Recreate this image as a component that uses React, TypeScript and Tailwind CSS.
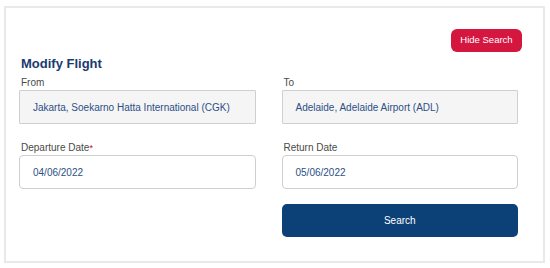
import React from 'react'

const font = { fontFamily: '"Liberation Sans", Arial, sans-serif' }

interface FieldProps {
  label: string
  value: string
  required?: boolean
  readOnly?: boolean
}

const Field: React.FC<FieldProps> = ({ label, value, required, readOnly }) => {
  return (
    <div className="flex flex-col">
      <label className="pl-[2px] text-[10px] leading-[12px] text-[#4a4a4a]">
        {label}
        {required && <span className="text-[#d0021b] text-[9px] align-top">*</span>}
      </label>
      <div
        className={`mt-[1px] h-[34px] flex items-center pl-[13px] text-[10px] text-[#2c4f86] border ${
          readOnly
            ? 'bg-[#f5f5f5] border-[#cfcfcf] rounded-[1px]'
            : 'bg-white border-[#cfcfcf] rounded-[4px]'
        }`}
      >
        {value}
      </div>
    </div>
  )
}

export default function App() {
  return (
    <div className="w-[550px] h-[268px] bg-white pt-[6px] pl-[4px]" style={font}>
      <div className="w-[541px] h-[257px] border-2 border-[#e9e9e9] bg-white pt-[21px] pl-[13px] pr-[25px]">
        <div className="flex justify-end mr-[-4px]">
          <button className="w-[71px] h-[23px] rounded-[6px] bg-[#d5173f] text-white text-[9.5px] flex items-center justify-center">
            Hide Search
          </button>
        </div>

        <h2 className="mt-[4px] pl-[2px] text-[13px] leading-[16px] font-bold text-[#1b3a6d]">Modify Flight</h2>

        <div className="mt-[5px] grid grid-cols-2 gap-x-[26px]">
          <Field label="From" value="Jakarta, Soekarno Hatta International (CGK)" readOnly />
          <Field label="To" value="Adelaide, Adelaide Airport (ADL)" readOnly />
        </div>

        <div className="mt-[18px] grid grid-cols-2 gap-x-[26px]">
          <Field label="Departure Date" value="04/06/2022" required />
          <Field label="Return Date" value="05/06/2022" />
        </div>

        <div className="mt-[15px] grid grid-cols-2 gap-x-[26px]">
          <div />
          <button className="h-[33px] rounded-[5px] bg-[#0c4177] text-white text-[10px] flex items-center justify-center">
            Search
          </button>
        </div>
      </div>
    </div>
  )
}
